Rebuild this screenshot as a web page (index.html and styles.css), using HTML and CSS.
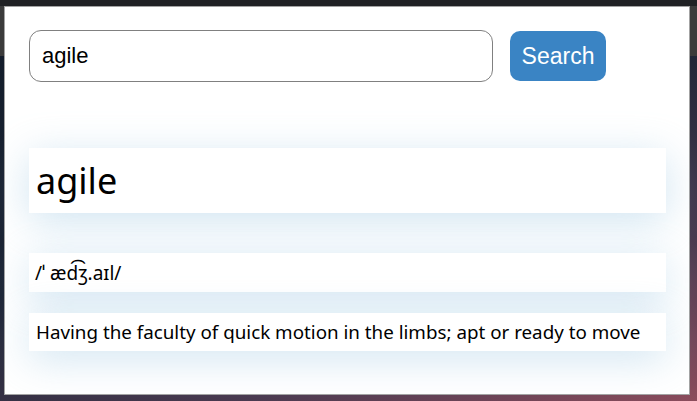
FILE: index.html
```html
<!DOCTYPE html>
<html>
<head>
<meta charset="utf-8">
<link rel="stylesheet" href="styles.css">
</head>
<body>
<div class="desktop">
  <div class="popup">
    <form class="search-row">
      <input class="search-input" type="text" value="agile">
      <button class="search-btn" type="button">Search</button>
    </form>
    <div class="card word">agile</div>
    <div class="card phon">/ˈ æd͡ʒ.aɪl/</div>
    <div class="card def">Having the faculty of quick motion in the limbs; apt or ready to move</div>
  </div>
</div>
</body>
</html>
```

FILE: styles.css
```css
html, body {
  margin: 0;
  padding: 0;
}
body {
  width: 697px;
  height: 401px;
  overflow: hidden;
}
.desktop {
  width: 697px;
  height: 401px;
  box-sizing: border-box;
  padding: 6px 0 0 4px;
  background:
    linear-gradient(to bottom, #202124 0 6px, #3b3b3b 6px 56px, transparent 56px),
    linear-gradient(160deg, #111b28 0%, #1d2536 45%, #4a3a50 75%, #8c4c5c 100%);
}
.popup {
  width: 686px;
  height: 389px;
  box-sizing: border-box;
  border: 1px solid #a3a3a3;
  background: #ffffff;
  padding: 23px 23px 0 24px;
  display: flex;
  flex-direction: column;
  font-family: "Noto Sans", "Open Sans", sans-serif;
  color: #000;
}
.search-row {
  display: flex;
  align-items: center;
  gap: 17px;
  margin: 0;
}
.search-input {
  width: 464px;
  height: 52px;
  box-sizing: border-box;
  border: 1px solid #808080;
  border-radius: 12px;
  padding: 0 12px;
  font-family: "Liberation Sans", Arial, sans-serif;
  font-size: 22px;
  color: #000;
  outline: none;
  background: #fff;
}
.search-btn {
  width: 96px;
  height: 50px;
  border: none;
  border-radius: 10px;
  background: #3a84c4;
  color: #fff;
  font-family: "Liberation Sans", Arial, sans-serif;
  font-size: 23px;
  padding: 0;
}
.card {
  background: #fff;
  box-shadow: 0 8px 40px rgba(150, 195, 225, 0.45);
  padding: 0 7px;
  display: flex;
  align-items: center;
}
.word {
  margin-top: 66px;
  height: 65px;
  font-size: 36px;
}
.phon {
  margin-top: 40px;
  height: 39px;
  font-size: 19px;
  padding-left: 6px;
}
.def {
  margin-top: 21px;
  height: 38px;
  font-size: 18.8px;
}
```
